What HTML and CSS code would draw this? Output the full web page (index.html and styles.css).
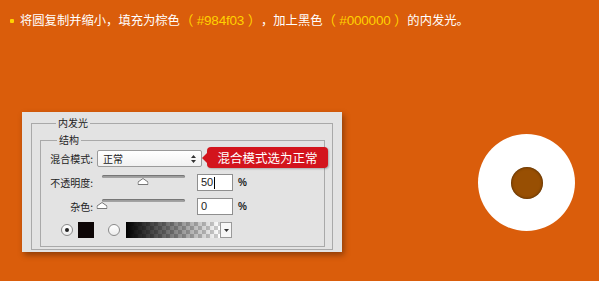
FILE: index.html
```html
<!DOCTYPE html>
<html lang="zh-CN">
<head>
  <meta charset="UTF-8">
  <title>内发光</title>
  <link rel="stylesheet" href="styles.css">
</head>
<body>
  <p class="intro"><span class="dot"></span>将圆复制并缩小，填充为棕色<span class="hl">（ #984f03 ）</span>，加上黑色<span class="hl">（ #000000 ）</span>的内发光。</p>
  <div class="stage">
    <div class="panel">
      <fieldset class="group outer">
        <legend>内发光</legend>
        <fieldset class="group inner">
          <legend>结构</legend>
          <div class="row">
            <span class="label">混合模式:</span>
            <div class="select">
              <span>正常</span>
              <svg class="arrows" width="5" height="8" viewBox="0 0 5 8"><path d="M0 3 L2.5 0 L5 3 Z M0 5 L2.5 8 L5 5 Z" fill="#333"/></svg>
            </div>
          </div>
          <div class="row">
            <span class="label">不透明度:</span>
            <div class="slider">
              <svg class="thumb" style="left:49%" width="11" height="7" viewBox="0 0 11 7"><path d="M0.5 6.5 L0.5 4 L5.5 0.5 L10.5 4 L10.5 6.5 Z" fill="#fff" stroke="#777"/></svg>
            </div>
            <div class="num">50<span class="caret"></span></div>
            <span class="pct">%</span>
          </div>
          <div class="row">
            <span class="label">杂色:</span>
            <div class="slider">
              <svg class="thumb" style="left:0%" width="11" height="7" viewBox="0 0 11 7"><path d="M0.5 6.5 L0.5 4 L5.5 0.5 L10.5 4 L10.5 6.5 Z" fill="#fff" stroke="#777"/></svg>
            </div>
            <div class="num">0</div>
            <span class="pct">%</span>
          </div>
          <div class="row swatches">
            <span class="radio checked"></span>
            <span class="swatch"></span>
            <span class="radio"></span>
            <span class="gradient"></span>
            <span class="drop">
              <svg width="5" height="3" viewBox="0 0 5 3"><path d="M0 0 L5 0 L2.5 3 Z" fill="#333"/></svg>
            </span>
          </div>
        </fieldset>
      </fieldset>
      <div class="tip">混合模式选为正常</div>
    </div>
    <div class="ring"><div class="core"></div></div>
  </div>
</body>
</html>
```

FILE: styles.css
```css
:root {
  --orange: #da5d0b;
  --yellow: #ffd200;
  --panel-bg: #e3e3e3;
  --line: #a9a9a9;
  --tip-red: #d3141c;
}
body {
  margin: 0;
  background: var(--orange);
  font-family: "Liberation Sans", "Noto Sans CJK SC", sans-serif;
  color: #fff;
  height: 281px;
  overflow: hidden;
}
.intro {
  margin: 0;
  padding: 11px 0 0 10px;
  font-size: 12.3px;
  line-height: 20px;
  display: flex;
  align-items: center;
  white-space: nowrap;
}
.dot {
  width: 4px;
  height: 4px;
  background: var(--yellow);
  border-radius: 1px;
  margin-right: 6px;
}
.hl {
  color: var(--yellow);
  font-size: 13.5px;
  letter-spacing: -0.2px;
}
.stage {
  display: flex;
  align-items: flex-start;
}
.panel {
  position: relative;
  width: 320px;
  box-sizing: border-box;
  margin: 81px 0 0 22px;
  padding: 5px 9px 2px;
  background: var(--panel-bg);
  box-shadow: 2px 3px 6px rgba(0,0,0,0.35);
  font-family: "Noto Sans CJK SC", sans-serif;
  font-size: 10px;
  color: #222;
}
.group {
  margin: 0;
  border: 1px solid var(--line);
  min-inline-size: 0;
}
.group legend {
  margin-left: 16px;
  padding: 0 2px;
  line-height: 12px;
}
.outer {
  padding: 5px 7px 2px 8px;
}
.inner {
  padding: 4px 0 8px 0;
}
.row {
  display: flex;
  align-items: flex-start;
  height: 17px;
  margin-bottom: 7px;
}
.label {
  width: 52px;
  text-align: right;
  line-height: 17px;
  margin-right: 4px;
  flex: none;
}
.select {
  width: 105px;
  height: 17px;
  box-sizing: border-box;
  border: 1px solid #9a9a9a;
  border-radius: 2px;
  background: linear-gradient(#fff, #f1f1f1);
  display: flex;
  align-items: center;
  justify-content: space-between;
  padding: 0 5px 0 5px;
  line-height: 15px;
}
.slider {
  position: relative;
  width: 83px;
  height: 3px;
  margin: 1px 12px 0 5px;
  background: #a2a2a2;
  border-radius: 2px;
  box-shadow: inset 0 1px 1px rgba(0,0,0,0.3);
}
.thumb {
  position: absolute;
  top: 3px;
  transform: translateX(-50%);
}
.num {
  width: 36px;
  height: 17px;
  box-sizing: border-box;
  border: 1px solid #8f8f8f;
  background: #fff;
  padding-left: 3px;
  font-family: "Liberation Sans", sans-serif;
  font-size: 11px;
  line-height: 15px;
  display: flex;
  align-items: center;
}
.caret {
  width: 1px;
  height: 12px;
  background: #000;
  margin-left: 1px;
}
.pct {
  margin-left: 5px;
  font-family: "Liberation Sans", sans-serif;
  font-weight: bold;
  font-size: 10px;
  line-height: 17px;
}
.swatches {
  height: 16px;
  align-items: center;
  margin-bottom: 0;
  padding-left: 20px;
}
.radio {
  width: 12px;
  height: 12px;
  box-sizing: border-box;
  border-radius: 50%;
  border: 1px solid #8a8a8a;
  background: linear-gradient(#fff, #ececec);
  display: flex;
  align-items: center;
  justify-content: center;
}
.radio.checked::after {
  content: "";
  width: 4px;
  height: 4px;
  border-radius: 50%;
  background: #222;
}
.swatch {
  width: 16px;
  height: 16px;
  background: #0d0606;
  margin: 0 14px 0 5px;
}
.gradient {
  width: 94px;
  height: 16px;
  margin-left: 6px;
  background:
    linear-gradient(90deg, #000, rgba(0,0,0,0)),
    repeating-conic-gradient(#cfcfcf 0 25%, #fff 0 50%) 0 0 / 8px 8px;
}
.drop {
  width: 12px;
  height: 16px;
  box-sizing: border-box;
  border: 1px solid #9a9a9a;
  background: #f7f7f7;
  display: flex;
  align-items: center;
  justify-content: center;
}
.tip {
  position: absolute;
  left: 185px;
  top: 35px;
  width: 121px;
  height: 21px;
  background: var(--tip-red);
  border-radius: 4px;
  color: #fff;
  font-size: 12.5px;
  line-height: 21px;
  text-align: center;
  box-shadow: 1px 1px 2px rgba(0,0,0,0.25);
}
.tip::before {
  content: "";
  position: absolute;
  left: -5px;
  top: 6px;
  border-style: solid;
  border-width: 5px 5px 5px 0;
  border-color: transparent var(--tip-red) transparent transparent;
}
.ring {
  width: 97px;
  height: 97px;
  margin: 103px 0 0 136px;
  border-radius: 50%;
  background: #fff;
  display: flex;
  align-items: center;
  justify-content: center;
}
.core {
  width: 32px;
  height: 32px;
  border-radius: 50%;
  background: #984f03;
  box-shadow: inset 0 0 3px rgba(0,0,0,0.6);
}
```
